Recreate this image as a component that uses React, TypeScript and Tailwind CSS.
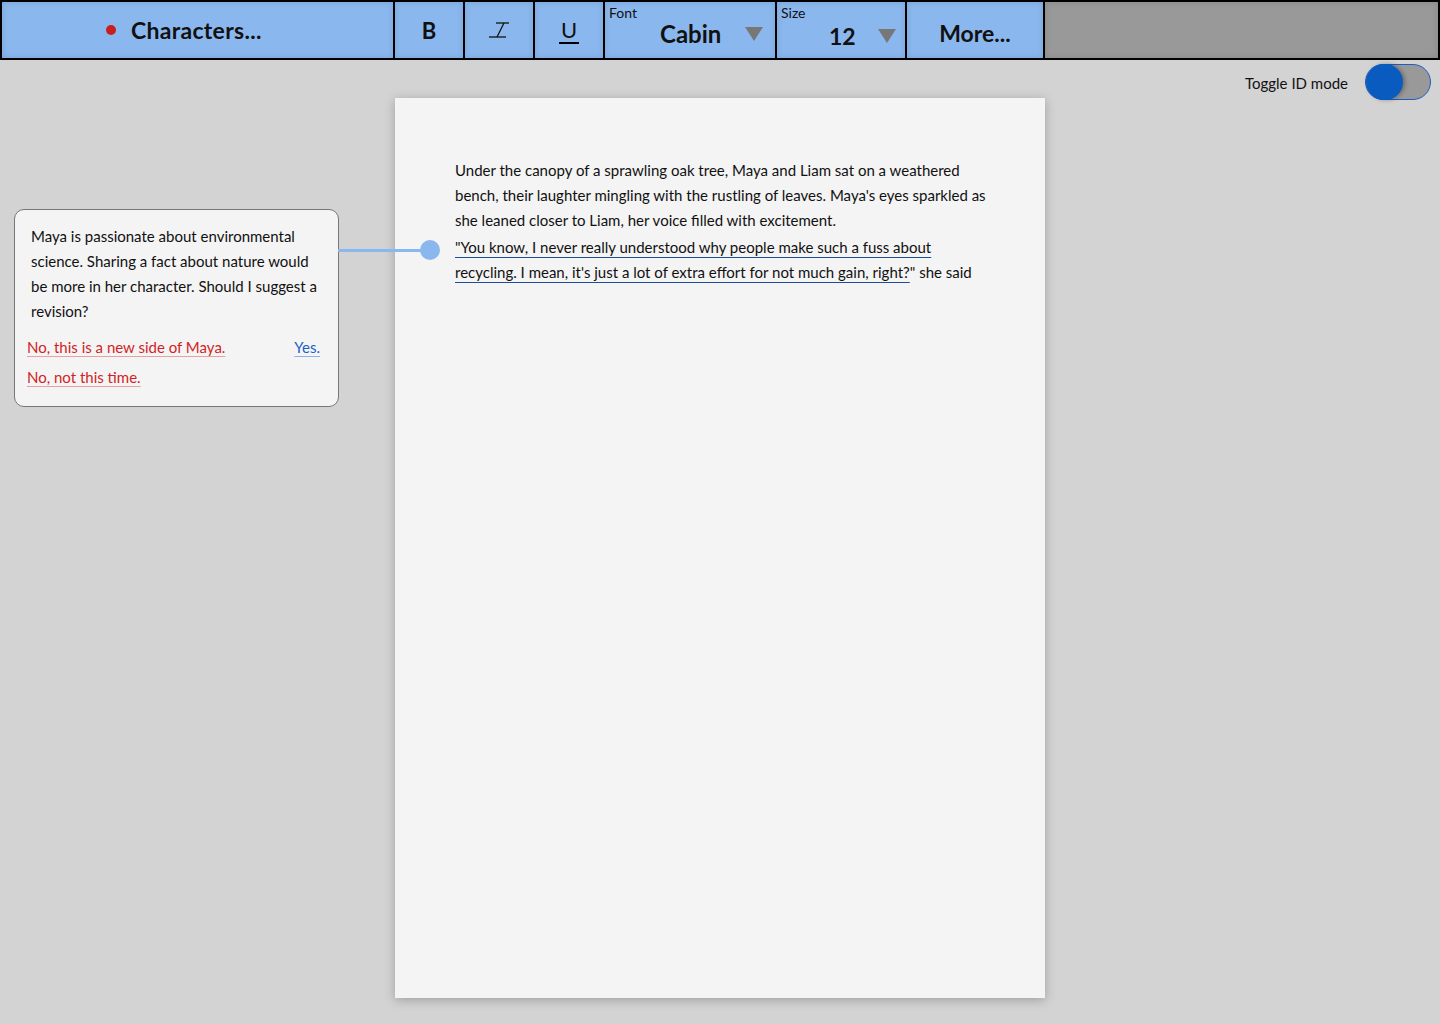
function Caret() {
  return (
    <svg width="18" height="14" viewBox="0 0 18 14" className="shrink-0">
      <polygon points="0,0 18,0 9,14" fill="#777777" />
    </svg>
  );
}

function ItalicIcon() {
  return (
    <svg width="24" height="18" viewBox="0 0 24 18">
      <line x1="9" y1="2" x2="22" y2="2" stroke="#111" strokeWidth="1.3" />
      <line x1="17" y1="2" x2="10" y2="16" stroke="#111" strokeWidth="1.3" />
      <line x1="2" y1="16" x2="19" y2="16" stroke="#111" strokeWidth="1.3" />
    </svg>
  );
}

const cell = "h-full bg-[#8ab8ee] border-r-2 border-black shadow-[inset_0_0_6px_rgba(0,0,0,0.12)]";

export default function App() {
  return (
    <div className="min-h-screen bg-[#d3d3d3] font-['Lato','Open_Sans',sans-serif] text-[#111]">
      {/* toolbar */}
      <div className="flex h-[60px] border-2 border-black">
        <div className={`${cell} w-[393px] flex items-center pl-[104px] gap-[15px]`}>
          <span className="w-[10px] h-[10px] rounded-full bg-[#c81e1e]" />
          <span className="text-[23px] font-bold tracking-[0.3px]">Characters...</span>
        </div>
        <div className={`${cell} w-[70px] flex items-center justify-center`}>
          <span className="text-[22px] font-bold">B</span>
        </div>
        <div className={`${cell} w-[70px] flex items-center justify-center`}>
          <ItalicIcon />
        </div>
        <div className={`${cell} w-[70px] flex items-center justify-center`}>
          <span className="text-[22px] leading-[24px] border-b-2 border-black px-[2px] mt-[2px]">U</span>
        </div>
        <div className={`${cell} w-[172px] relative`}>
          <span className="absolute left-[4px] top-[2px] text-[14px] leading-[18px]">Font</span>
          <div className="flex items-center h-full pl-[55px] pt-[8px] gap-[24px]">
            <span className="text-[24px] font-bold">Cabin</span>
            <Caret />
          </div>
        </div>
        <div className={`${cell} w-[130px] relative`}>
          <span className="absolute left-[4px] top-[2px] text-[14px] leading-[18px]">Size</span>
          <div className="flex items-center h-full pl-[52px] pt-[12px] gap-[22px]">
            <span className="text-[23px] font-bold">12</span>
            <Caret />
          </div>
        </div>
        <div className={`${cell} w-[138px] flex items-center justify-center pt-[6px]`}>
          <span className="text-[23px] font-bold">More...</span>
        </div>
        <div className="flex-1 h-full bg-[#999999] shadow-[inset_0_0_6px_rgba(0,0,0,0.12)]" />
      </div>

      {/* workspace */}
      <div className="flex">
        <div className="w-[395px] shrink-0 pt-[149px] pl-[14px]">
          <div className="relative w-[325px] rounded-[10px] border border-[#777] bg-[#f4f4f4] pt-[14px] pb-[16px] text-[15px] leading-[25px]">
            <p className="pl-[16px] pr-[14px]">
              Maya is passionate about environmental science. Sharing a fact about nature would be more in her character. Should I suggest a revision?
            </p>
            <div className="mt-[11px] pl-[12px] pr-[18px] flex flex-col gap-[5px]">
              <div className="flex justify-between">
                <a className="text-[#d21f26] underline decoration-[#e8a0a4] underline-offset-[3px] cursor-pointer">No, this is a new side of Maya.</a>
                <a className="text-[#1d5fc4] underline decoration-[#8fb0e2] underline-offset-[3px] cursor-pointer">Yes.</a>
              </div>
              <div>
                <a className="text-[#d21f26] underline decoration-[#e8a0a4] underline-offset-[3px] cursor-pointer">No, not this time.</a>
              </div>
            </div>
            {/* connector to highlighted text */}
            <div className="absolute left-full top-[30px] flex items-center">
              <div className="w-[84px] h-[3px] bg-[#8ab8ee]" />
              <div className="w-[20px] h-[20px] rounded-full bg-[#8ab8ee] -ml-[2px]" />
            </div>
          </div>
        </div>

        <div className="w-[650px] shrink-0 mt-[38px] h-[900px] bg-[#f4f4f4] shadow-[0_2px_10px_rgba(0,0,0,0.25)] pl-[60px] pr-[50px] pt-[60px] text-[15px] leading-[25px]">
          <p>
            Under the canopy of a sprawling oak tree, Maya and Liam sat on a weathered bench, their laughter mingling with the rustling of leaves. Maya's eyes sparkled as she leaned closer to Liam, her voice filled with excitement.
          </p>
          <p className="mt-[2px]">
            <span className="underline decoration-[#1f4e99] underline-offset-[4px]">
              "You know, I never really understood why people make such a fuss about recycling. I mean, it's just a lot of extra effort for not much gain, right?
            </span>
            " she said
          </p>
        </div>

        <div className="flex-1 flex justify-end items-start pt-[4px] pr-[9px] gap-[17px]">
          <span className="text-[15px] mt-[8px]">Toggle ID mode</span>
          <div className="w-[66px] h-[36px] rounded-full bg-[#999999] border border-[#1d5fc4] relative">
            <div className="absolute left-0 top-[-1px] w-[37px] h-[36px] rounded-full bg-[#0a5bc0] shadow-[2px_0_4px_rgba(0,0,0,0.3)]" />
          </div>
        </div>
      </div>
    </div>
  );
}
